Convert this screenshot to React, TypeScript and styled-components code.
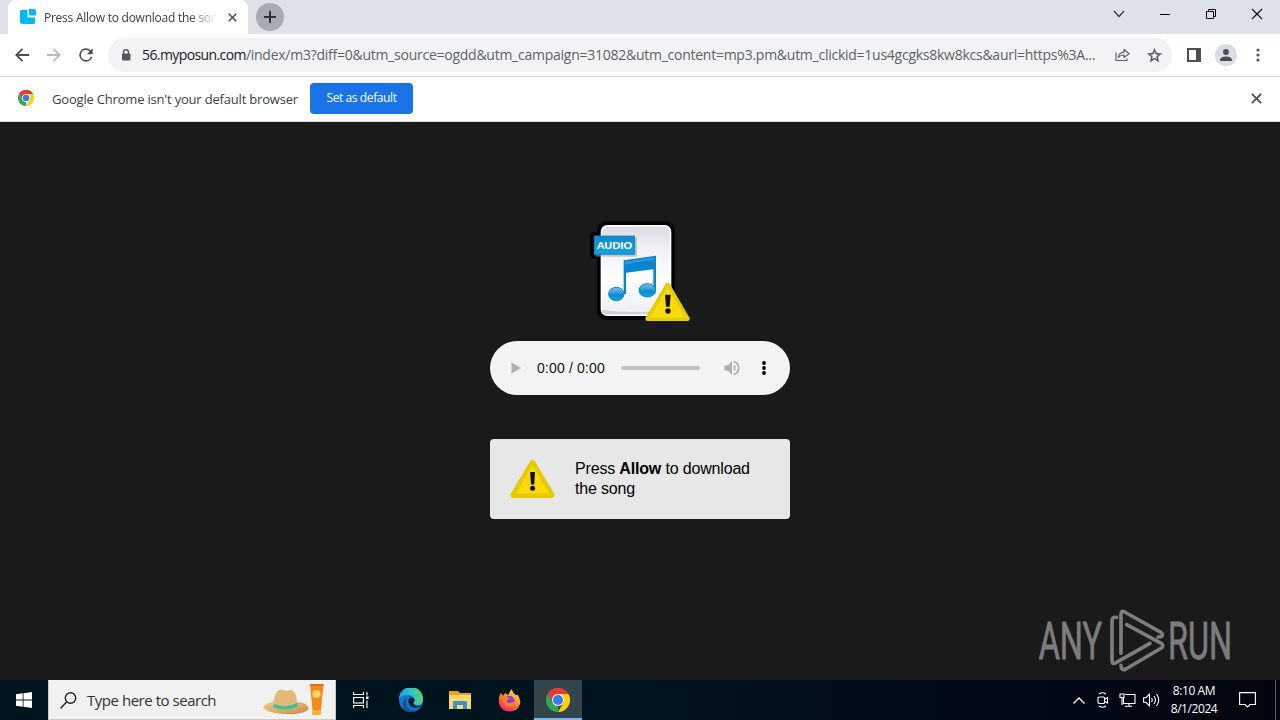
import styled, { createGlobalStyle } from 'styled-components';

const GlobalStyle = createGlobalStyle`
  * {
    box-sizing: border-box;
  }
  body {
    margin: 0;
    overflow: hidden;
    font-family: 'Open Sans', 'Noto Sans', sans-serif;
  }
  svg {
    display: block;
    flex-shrink: 0;
  }
`;

const Screen = styled.div`
  display: flex;
  flex-direction: column;
  width: 1280px;
  height: 720px;
  background: #1a1a1a;
`;

const TabStrip = styled.div`
  display: flex;
  height: 34px;
  padding-left: 8px;
  background: #dee1e8;
`;

const Tab = styled.div`
  display: flex;
  align-items: center;
  width: 240px;
  height: 34px;
  padding-left: 12px;
  background: #fff;
  border-radius: 8px 8px 0 0;
`;

const TabTitle = styled.div`
  width: 172px;
  margin: 0 8px 0 8px;
  overflow: hidden;
  white-space: nowrap;
  font-size: 12px;
  letter-spacing: -0.25px;
  color: #3c4043;
  mask-image: linear-gradient(to right, #000 145px, transparent 174px);
`;

const NewTab = styled.div`
  display: flex;
  align-items: center;
  justify-content: center;
  width: 28px;
  height: 28px;
  margin: 3px 0 0 8px;
  border-radius: 50%;
  background: #a8abb2;
`;

const WindowControls = styled.div`
  display: flex;
  margin-left: auto;
`;

const Slot = styled.div<{ $width: number; $height: number }>`
  display: flex;
  align-items: center;
  justify-content: center;
  flex-shrink: 0;
  width: ${({ $width }) => $width}px;
  height: ${({ $height }) => $height}px;
`;

const Toolbar = styled.div`
  display: flex;
  align-items: center;
  height: 43px;
  padding: 0 6px;
  background: #fff;
  border-bottom: 1px solid #d5d7da;
`;

const Omnibox = styled.div`
  display: flex;
  align-items: center;
  width: 1064px;
  height: 34px;
  margin: 0 6px;
  padding: 0 2px 0 10px;
  border-radius: 17px;
  background: #f1f3f4;
`;

const Url = styled.div`
  flex: 1;
  min-width: 0;
  margin-left: 8px;
  white-space: nowrap;
  font-size: 14px;
  line-height: 20px;
  letter-spacing: -0.255px;
  color: #5f6368;
`;

const Host = styled.span`
  letter-spacing: -0.6px;
  color: #202124;
`;

const Avatar = styled.div`
  display: flex;
  align-items: center;
  justify-content: center;
  width: 22px;
  height: 22px;
  border-radius: 50%;
  background: #dadce4;
`;

const InfoBar = styled.div`
  display: flex;
  align-items: center;
  height: 45px;
  padding: 0 14px 2px 18px;
  background: #fff;
  border-bottom: 1px solid #d5d7da;
`;

const InfoText = styled.div`
  width: 246px;
  margin: 1px 12px 0 18px;
  white-space: nowrap;
  font-size: 13px;
  letter-spacing: -0.19px;
  color: #3c4043;
`;

const DefaultButton = styled.button`
  width: 103px;
  height: 31px;
  margin-right: auto;
  padding: 0 0 2px;
  border: none;
  border-radius: 4px;
  background: #1a73e8;
  color: #fff;
  font-family: inherit;
  font-size: 12px;
  letter-spacing: -0.4px;
`;

const Page = styled.main`
  position: relative;
  display: flex;
  flex-direction: column;
  align-items: center;
  height: 558px;
  padding-top: 98px;
  font-family: 'Liberation Sans', Arial, sans-serif;
`;

const Player = styled.div`
  display: flex;
  align-items: center;
  width: 300px;
  height: 54px;
  margin: 19px 0 44px;
  padding-left: 10px;
  border-radius: 27px;
  background: #f1f3f4;
`;

const Time = styled.div`
  width: 84px;
  margin-left: 5px;
  font-size: 14px;
  letter-spacing: 0.15px;
  white-space: nowrap;
  color: #111;
`;

const Track = styled.div`
  width: 79px;
  height: 4px;
  margin-right: 16px;
  border-radius: 2px;
  background: #bfc1c2;
`;

const Message = styled.div`
  display: flex;
  align-items: center;
  gap: 20px;
  width: 300px;
  height: 80px;
  padding: 0 20px;
  border-radius: 4px;
  background: #e7e7e7;
`;

const MessageText = styled.p`
  width: 190px;
  margin: 0;
  font-size: 16px;
  line-height: 20px;
  letter-spacing: -0.17px;
  color: #000;
`;

const Watermark = styled.svg`
  position: absolute;
  right: 42px;
  bottom: 8px;
`;

const Taskbar = styled.footer`
  display: flex;
  height: 40px;
  background: linear-gradient(to right, #00141d, #00131e 50%, #020817 80%, #02050f);
`;

const SearchBox = styled.div`
  display: flex;
  align-items: center;
  width: 288px;
  height: 40px;
  padding-left: 11px;
  border: 1px solid #c9cccd;
  border-top-color: #f1f1f1;
  background: #f1f1f1;
`;

const SearchText = styled.div`
  width: 166px;
  margin: 0 10px 0 10px;
  white-space: nowrap;
  font-size: 15px;
  letter-spacing: -0.47px;
  color: #333;
`;

const TaskButton = styled.div<{ $active?: boolean }>`
  display: flex;
  align-items: center;
  justify-content: center;
  width: 48px;
  height: 40px;
  margin-left: 1px;
  padding-top: 2px;
  background: ${({ $active }) => ($active ? '#33444d' : 'transparent')};
  border-bottom: 2px solid ${({ $active }) => ($active ? '#76b9ed' : 'transparent')};
`;

const Tray = styled.div`
  display: flex;
  margin-left: auto;
`;

const Clock = styled.div`
  width: 62px;
  padding-top: 2px;
  text-align: center;
  font-size: 12px;
  line-height: 18px;
  letter-spacing: -0.42px;
  color: #fff;
`;

const ShowDesktop = styled.div`
  width: 5px;
  height: 40px;
  margin-left: 6px;
  border-left: 1px solid #555b66;
`;

const ChromeLogo = ({ size }: { size: number }) => (
  <svg width={size} height={size} viewBox="0 0 48 48">
    <path d="M24 24 3.2 12A24 24 0 0 1 44.8 12Z" fill="#e33b2e" />
    <path d="M24 24V48A24 24 0 0 1 3.2 12L13.6 30Z" fill="#2da94f" />
    <path d="M24 12H44.8A24 24 0 0 1 24 48L34.4 30Z" fill="#fdd10a" />
    <path d="M3.2 12A24 24 0 0 1 44.8 12H24L13.6 18 11 25.5Z" fill="#e33b2e" />
    <circle cx="24" cy="24" r="12" fill="#fff" />
    <circle cx="24" cy="24" r="10" fill="#3979e8" />
  </svg>
);

const WarningIcon = () => (
  <svg width="45" height="40" viewBox="0 0 45 40">
    <path d="M22.5 4 41.500 36H3.500Z" fill="#f9d80a" stroke="#e6c906" strokeWidth="6" strokeLinejoin="round" />
    <path d="M22.5 6 39 34.500H6Z" fill="#fbd90b" />
    <path d="M20.2 13h4.8l-.8 12.5h-3.2Z" fill="#111" />
    <circle cx="22.6" cy="29.3" r="2.5" fill="#111" />
  </svg>
);

const Close = ({ size, color, weight }: { size: number; color: string; weight: number }) => (
  <svg width={size} height={size} viewBox="0 0 12 12" stroke={color} strokeWidth={weight}>
    <path d="M1 1 11 11M11 1 1 11" />
  </svg>
);

const AudioFile = () => (
  <svg width="100" height="102" viewBox="30 30 300 306">
    <defs>
      <linearGradient id="paper" x1="0" y1="0" x2="0" y2="1">
        <stop offset="0" stopColor="#d9dbe2" />
        <stop offset="0.25" stopColor="#f1f1f5" />
        <stop offset="0.6" stopColor="#fff" />
        <stop offset="1" stopColor="#eeeef2" />
      </linearGradient>
      <linearGradient id="label" x1="0" y1="0" x2="0" y2="1">
        <stop offset="0" stopColor="#1a84c2" />
        <stop offset="1" stopColor="#12a5e6" />
      </linearGradient>
      <linearGradient id="head" x1="0" y1="0" x2="0" y2="1">
        <stop offset="0" stopColor="#7cc4ec" />
        <stop offset="0.4" stopColor="#3a9fda" />
        <stop offset="0.55" stopColor="#0d8ace" />
        <stop offset="1" stopColor="#0aa9e8" />
      </linearGradient>
    </defs>
    <rect x="51" y="34" width="234" height="296" rx="30" fill="#000" />
    <rect x="31" y="66" width="145" height="79" rx="8" fill="#000" />
    <rect x="62" y="45" width="212" height="273" rx="20" fill="#fff" />
    <rect x="67" y="50" width="202" height="263" rx="15" fill="url(#paper)" />
    <path d="M67 300Q160 312 269 300Q268 313 254 313H82Q67 313 67 300Z" fill="#cfcfd6" />
    <rect x="46" y="82" width="125" height="58" fill="#9b9da3" opacity="0.55" />
    <rect x="42" y="77" width="123" height="57" fill="url(#label)" />
    <rect x="44" y="79" width="119" height="53" fill="none" stroke="#0b8ccc" strokeWidth="3" />
    <text x="51" y="118" textLength="105" lengthAdjust="spacingAndGlyphs" fontFamily="Lato" fontWeight="900" fontSize="30" fill="#fff">AUDIO</text>
    <path d="M131 151 228 137V240H220V178L138 188V252H131Z" fill="#0785cf" />
    <path d="M135 155 224 142V150Q180 154 135 164Z" fill="#2f97d8" />
    <ellipse cx="109" cy="252" rx="23" ry="20" fill="url(#head)" stroke="#0785cf" strokeWidth="3" />
    <ellipse cx="202" cy="241" rx="25" ry="20" fill="url(#head)" stroke="#0785cf" strokeWidth="3" />
    <path d="M263 225 322 326H203Z" fill="#f8d90a" stroke="#e6cb08" strokeWidth="14" strokeLinejoin="round" />
    <path d="M263 232 316 323H210Z" fill="#f9da0a" />
    <path d="M255 254h17l-3 36h-11Z" fill="#111" />
    <circle cx="264" cy="303" r="8" fill="#111" />
  </svg>
);

const App = () => {
  return (
    <Screen>
      <GlobalStyle />
      <TabStrip>
        <Tab>
          <svg width="16" height="16" viewBox="0 0 16 16" fill="#00b9f2">
            <path d="M1.5 1H7.5V8.5H15V13.5Q15 15 13.5 15H2.5Q0 15 0 12.5V2.5Q0 1 1.5 1Z" />
            <path d="M9 0H14.5Q16 0 16 1.500V6.500H10.500Q9 6.500 9 5Z" />
          </svg>
          <TabTitle>Press Allow to download the song</TabTitle>
          <Slot $width={16} $height={16}>
            <Close size={9} color="#4b4e52" weight={2} />
          </Slot>
        </Tab>
        <NewTab>
          <svg width="12" height="12" viewBox="0 0 12 12" stroke="#303236" strokeWidth="2">
            <path d="M6 0V12M0 6H12" />
          </svg>
        </NewTab>
        <WindowControls>
          <Slot $width={46} $height={28}>
            <svg width="12" height="8" viewBox="0 0 12 8" fill="none" stroke="#333" strokeWidth="1.2">
              <path d="M1 1 6 6.500 11 1" />
            </svg>
          </Slot>
          <Slot $width={46} $height={28}>
            <svg width="10" height="1" viewBox="0 0 10 1">
              <rect width="10" height="1" fill="#000" />
            </svg>
          </Slot>
          <Slot $width={46} $height={28}>
            <svg width="10" height="10" viewBox="0 0 10 10" fill="none" stroke="#000">
              <path d="M.5 2.500H7.500V9.500H.5ZM2.500 2.500V.5H9.500V7.500H7.500" />
            </svg>
          </Slot>
          <Slot $width={46} $height={28}>
            <Close size={12} color="#000" weight={1.1} />
          </Slot>
        </WindowControls>
      </TabStrip>

      <Toolbar>
        <Slot $width={32} $height={34}>
          <svg width="14" height="14" viewBox="0 0 14 14" fill="none" stroke="#4b4e52" strokeWidth="1.8">
            <path d="M14 7H1.500M7.500 .8 1.300 7 7.500 13.200" />
          </svg>
        </Slot>
        <Slot $width={32} $height={34}>
          <svg width="14" height="14" viewBox="0 0 14 14" fill="none" stroke="#b9bbbe" strokeWidth="1.8">
            <path d="M0 7H12.500M6.500 .8 12.700 7 6.500 13.200" />
          </svg>
        </Slot>
        <Slot $width={32} $height={34}>
          <svg width="20" height="20" viewBox="0 0 24 24" fill="#4b4e52">
            <path d="M17.650 6.350A8 8 0 1 0 19.730 14h-2.080A6 6 0 1 1 12 6c1.660 0 3.140.69 4.220 1.780L13 11h7V4z" />
          </svg>
        </Slot>
        <Omnibox>
          <Slot $width={16} $height={16}>
            <svg width="10" height="12" viewBox="0 0 10 12">
              <path d="M2.500 5V3Q2.500 .8 5 .8T7.500 3V5" fill="none" stroke="#55585c" strokeWidth="1.400" />
              <rect x="1" y="4.500" width="8.500" height="7" rx="1" fill="#55585c" />
            </svg>
          </Slot>
          <Url>
            <Host>56.myposun.com</Host>
            /index/m3?diff=0&amp;utm_source=ogdd&amp;utm_campaign=31082&amp;utm_content=mp3.pm&amp;utm_clickid=1us4gcgks8kw8kcs&amp;aurl=https%3A...
          </Url>
          <Slot $width={32} $height={34}>
            <svg width="15" height="14" viewBox="0 0 15 14" fill="none" stroke="#5f6368" strokeWidth="1.2">
              <path d="M1 4.500V12.500H12V10.500" />
              <path d="M3.500 9.500Q4 4.500 9 4.200V1.300L14 5.700 9 9.500V7Q5.500 6.800 3.500 9.500Z" strokeLinejoin="round" />
            </svg>
          </Slot>
          <Slot $width={32} $height={34}>
            <svg width="17" height="17" viewBox="0 0 24 24" fill="#54575b">
              <path d="m22 9.240-7.190-.62L12 2 9.190 8.630 2 9.240l5.460 4.730L5.820 21 12 17.270 18.180 21l-1.630-7.030zM12 15.400l-3.760 2.270 1-4.280-3.320-2.880 4.380-.38L12 6.100l1.710 4.040 4.380.38-3.320 2.880 1 4.280z" stroke="#54575b" strokeWidth="0.5" />
            </svg>
          </Slot>
        </Omnibox>
        <Slot $width={32} $height={34}>
          <svg width="14" height="14" viewBox="0 0 14 14">
            <rect x="1" y="1" width="12" height="12" fill="none" stroke="#4b4e52" strokeWidth="2" />
            <rect x="9" y="1" width="4" height="12" fill="#4b4e52" />
          </svg>
        </Slot>
        <Slot $width={32} $height={34}>
          <Avatar>
            <svg width="12" height="12" viewBox="0 0 12 12" fill="#4a4e5c">
              <circle cx="6" cy="3" r="2.900" />
              <path d="M0 12V10.500Q1 7.500 6 7.500T12 10.500V12Z" />
            </svg>
          </Avatar>
        </Slot>
        <Slot $width={32} $height={34}>
          <svg width="4" height="14" viewBox="0 0 4 14" fill="#54575b">
            <circle cx="2" cy="2" r="1.600" />
            <circle cx="2" cy="7" r="1.600" />
            <circle cx="2" cy="12" r="1.600" />
          </svg>
        </Slot>
      </Toolbar>

      <InfoBar>
        <ChromeLogo size={16} />
        <InfoText>Google Chrome isn't your default browser</InfoText>
        <DefaultButton>Set as default</DefaultButton>
        <Slot $width={20} $height={20}>
          <Close size={11} color="#4b4e52" weight={2} />
        </Slot>
      </InfoBar>

      <Page>
        <AudioFile />
        <Player>
          <Slot $width={32} $height={32}>
            <svg width="10" height="12" viewBox="0 0 10 12" fill="#aeb0b1">
              <path d="M.5.5 10 6 .5 11.500Z" />
            </svg>
          </Slot>
          <Time>0:00 / 0:00</Time>
          <Track />
          <Slot $width={32} $height={32}>
            <svg width="20" height="20" viewBox="0 0 24 24" fill="#adafb0">
              <path d="M3 9v6h4l5 5V4L7 9H3zm13.500 3A4.500 4.500 0 0 0 14 7.970v8.050A4.500 4.500 0 0 0 16.500 12zM14 3.230v2.060a7 7 0 0 1 0 13.420v2.060a9 9 0 0 0 0-17.540z" />
            </svg>
          </Slot>
          <Slot $width={32} $height={32}>
            <svg width="4" height="14" viewBox="0 0 4 14" fill="#000">
              <circle cx="2" cy="2" r="1.900" />
              <circle cx="2" cy="7" r="1.900" />
              <circle cx="2" cy="12" r="1.900" />
            </svg>
          </Slot>
        </Player>
        <Message>
          <WarningIcon />
          <MessageText>
            Press <b>Allow</b> to download the song
          </MessageText>
        </Message>
        <Watermark width="200" height="64" viewBox="54 24 600 192" fill="none" stroke="#7d7d7d" strokeWidth="11" strokeLinejoin="round" strokeLinecap="round">
          <g fill="#7d7d7d" strokeWidth="2.500" fontFamily="Roboto" fontSize="155">
            <text x="56" y="178" textLength="190" lengthAdjust="spacingAndGlyphs">ANY</text>
            <text x="444" y="178" textLength="192" lengthAdjust="spacingAndGlyphs">RUN</text>
          </g>
          <path d="M303 160V42Q303 30 314 36L423 97Q431 104 424 110L414 111" />
          <path d="M290 52Q276 50 276 62V183Q276 194 288 188L390 130" />
          <path d="M303 196Q304 214 318 207L424 144Q433 137 424 130L320 74" />
        </Watermark>
      </Page>

      <Taskbar>
        <Slot $width={48} $height={40}>
          <svg width="16" height="16" viewBox="0 0 16 16" fill="#fff">
            <path d="M0 2.300 6.700 1.300V7.600H0ZM7.500 1.200 16 0V7.600H7.500ZM0 8.400H6.700V14.700L0 13.700ZM7.500 8.400H16V16L7.500 14.800Z" />
          </svg>
        </Slot>
        <SearchBox>
          <svg width="17" height="17" viewBox="0 0 17 17" fill="none" stroke="#222" strokeWidth="1.400">
            <circle cx="10.500" cy="6" r="5.200" />
            <path d="M6.700 9.800 .5 16.500" />
          </svg>
          <SearchText>Type here to search</SearchText>
          <svg width="62" height="34" viewBox="0 0 62 34">
            <defs>
              <linearGradient id="straw" x1="0" y1="0" x2="1" y2="1">
                <stop offset="0" stopColor="#f3cf88" />
                <stop offset="1" stopColor="#c98a45" />
              </linearGradient>
            </defs>
            <path d="M0 24Q4 19 11 19H35Q45 20 46 26Q41 32 24 31Q5 31 0 24Z" fill="url(#straw)" />
            <path d="M10 24Q11 9 16 7Q20 6 23 8Q29 5 32 10Q34 15 34 23Q23 30 10 24Z" fill="#e4b878" />
            <path d="M11 21Q23 26 34 20L34.500 23.500Q24 29 10 24.500Z" fill="#35bfa2" />
            <path d="M47 1H60.500L58 27H49.500Z" fill="#f58a1c" />
            <path d="M47 1H60.500V3H47Z" fill="#d9730f" />
            <circle cx="53.500" cy="11" r="4" fill="#ffd667" />
            <rect x="49" y="27" width="9" height="5" rx="1" fill="#f8b23a" />
          </svg>
        </SearchBox>
        <TaskButton>
          <svg width="16" height="16" viewBox="0 0 16 16" fill="none" stroke="#fff" strokeWidth="1.100">
            <path d="M.6 0V2.500H10.400V0M.6 16V13.500H10.400V16" />
            <rect x=".6" y="5.500" width="9.800" height="5.500" />
            <path d="M14 0V3.500M14 8.500V16" />
            <rect x="13" y="4.500" width="2.500" height="2.500" fill="#fff" stroke="none" />
          </svg>
        </TaskButton>
        <Slot $width={1} $height={40} />
        <TaskButton>
          <svg width="24" height="24" viewBox="0 0 24 24">
            <defs>
              <linearGradient id="edgeTop" x1="0" y1="0.400" x2="1" y2="0.300">
                <stop offset="0" stopColor="#1c9de0" />
                <stop offset="0.500" stopColor="#30bfd0" />
                <stop offset="1" stopColor="#61d46a" />
              </linearGradient>
            </defs>
            <circle cx="12" cy="12" r="12" fill="#1576c9" />
            <path d="M0 11A12 12 0 0 1 24 11Q24 17 18 17Q14 17 14.500 14.500Q16 13 15.500 11Q14 7 8.500 7Q3 7 0 11Z" fill="url(#edgeTop)" />
            <path d="M8.500 10.500Q5 15 9 20Q13 25 21 20A12 12 0 0 1 11 24Q3 22 4 15Q5 11 8.500 10.500Z" fill="#124f9d" />
            <path d="M12 9.500Q8.500 11 9.500 15Q12 20.500 18 19.500Q21 19 22.500 17.500Q15 19 14.300 15Q16 13 15.500 11Q14 9 12 9.500Z" fill="#05202f" />
          </svg>
        </TaskButton>
        <TaskButton>
          <svg width="22" height="19" viewBox="0 0 22 19">
            <path d="M0 0H9L11 2H22V18H0Z" fill="#e7a51c" />
            <path d="M0 4H22V18H0Z" fill="#fcd76c" />
            <path d="M4 18V11Q4 10 5 10H17Q18 10 18 11V18H14V14H8V18Z" fill="#3b93d3" />
          </svg>
        </TaskButton>
        <TaskButton>
          <svg width="23" height="23" viewBox="0 0 24 24">
            <defs>
              <linearGradient id="fox" x1="0.800" y1="0" x2="0.200" y2="1">
                <stop offset="0" stopColor="#ffe34a" />
                <stop offset="0.450" stopColor="#ff9226" />
                <stop offset="0.750" stopColor="#ff4650" />
                <stop offset="1" stopColor="#e82682" />
              </linearGradient>
            </defs>
            <path d="M3 4 5 7 8 4Q8 6 11 6Q12 2 14.500 0Q15 4 19 6.500L20.500 6Q24 11 23 15.500Q21 23.500 12 23.500T.8 14Q.5 8 3 4Z" fill="url(#fox)" />
            <circle cx="12" cy="12.500" r="5.300" fill="#8a3bdb" />
            <path d="M5 9Q8 7.500 12 9.500Q12 11.500 9 11.500Q9 14.500 12 14.500Q15 14.500 17 13Q16 19 11 19Q5 18 5 9Z" fill="#ff8125" />
          </svg>
        </TaskButton>
        <TaskButton $active>
          <ChromeLogo size={24} />
        </TaskButton>
        <Tray>
          <Slot $width={24} $height={40}>
            <svg width="12" height="7" viewBox="0 0 12 7" fill="none" stroke="#fff" strokeWidth="1.300">
              <path d="M.5 6.500 6 1 11.500 6.500" />
            </svg>
          </Slot>
          <Slot $width={24} $height={40}>
            <svg width="12" height="16" viewBox="0 0 12 16" fill="none" stroke="#fff" strokeWidth="1.100">
              <rect x="1" y="5" width="6.500" height="6.500" rx="1" />
              <path d="M7.500 7.500 10.500 5.500V11L7.500 9.300M2 2Q5.500-.5 9 2M2 14Q5.500 16.500 9 14" />
            </svg>
          </Slot>
          <Slot $width={24} $height={40}>
            <svg width="17" height="14" viewBox="0 0 17 14" fill="none" stroke="#fff" strokeWidth="1.100">
              <path d="M6 1.500H16V10.500H4.500V5M10 10.500V13M6 13.300H13M1 1H5V4.500H1ZM3 4.500V12" />
            </svg>
          </Slot>
          <Slot $width={24} $height={40}>
            <svg width="17" height="14" viewBox="0 0 17 14" fill="none" stroke="#fff" strokeWidth="1.100">
              <path d="M.6 4.700H3L6.500 1.200V12.800L3 9.300H.6ZM8.500 5Q10 7 8.500 9M11 3Q13.800 7 11 11M13.500 1Q18 7 13.500 13" />
            </svg>
          </Slot>
          <Clock>
            8:10 AM
            <br />
            8/1/2024
          </Clock>
          <Slot $width={44} $height={40}>
            <svg width="17" height="16" viewBox="0 0 17 16" fill="none" stroke="#fff" strokeWidth="1.100">
              <path d="M.6.6H16.400V12.500H11L8.500 15 6 12.500H.6Z" />
            </svg>
          </Slot>
          <ShowDesktop />
        </Tray>
      </Taskbar>
    </Screen>
  );
};

export default App;
